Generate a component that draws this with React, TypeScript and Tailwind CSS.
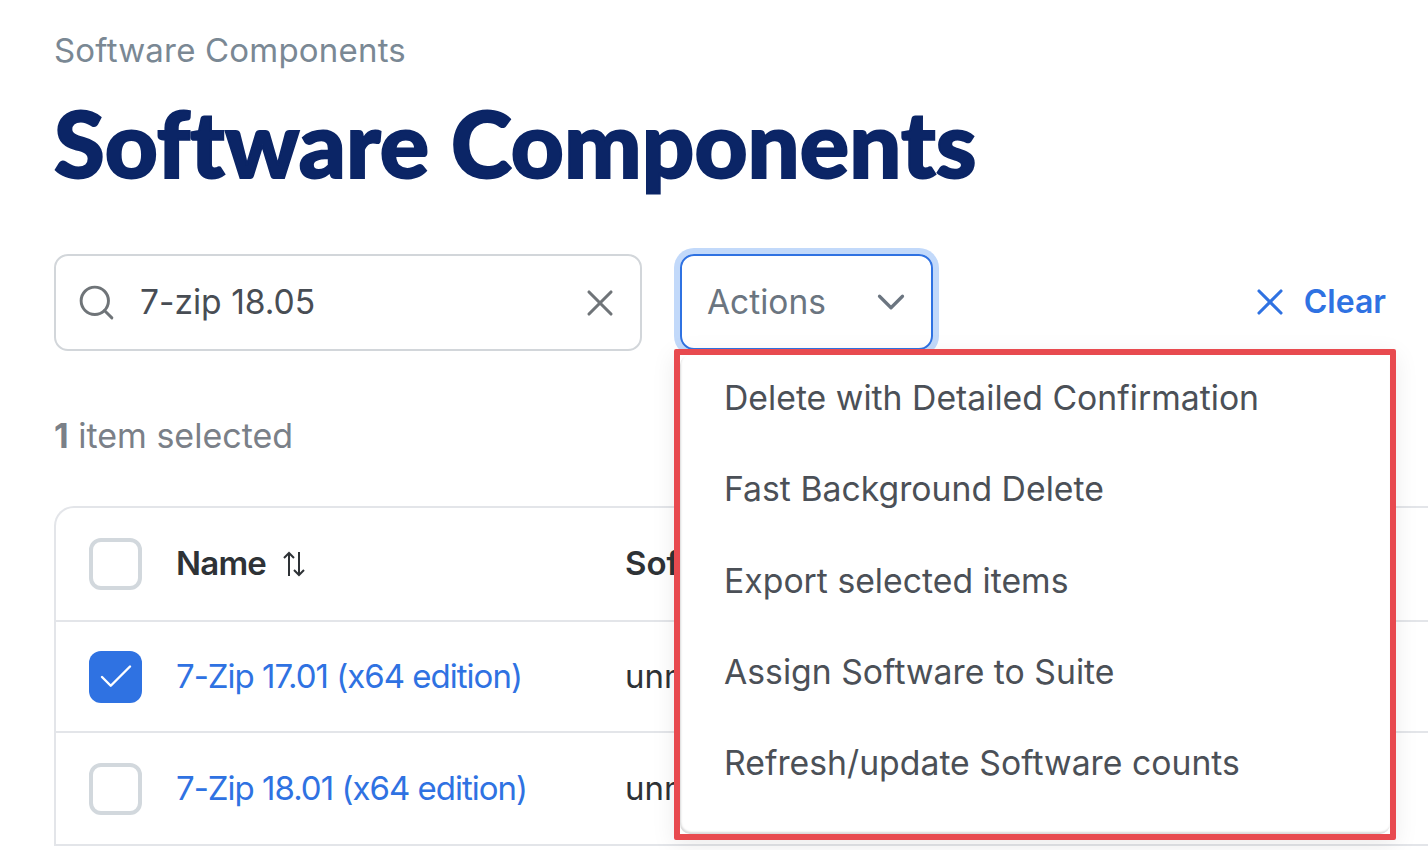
import { Check, ChevronDown, Search, X } from 'lucide-react';

const menuItems = [
  'Delete with Detailed Confirmation',
  'Fast Background Delete',
  'Export selected items',
  'Assign Software to Suite',
  'Refresh/update Software counts',
];

function Checkbox({ checked = false }: { checked?: boolean }) {
  if (checked) {
    return (
      <span className="flex h-[52px] w-[53px] items-center justify-center rounded-[12px] bg-[#2f72e2]">
        <Check size={42} strokeWidth={1.4} className="text-white" />
      </span>
    );
  }
  return <span className="block h-[52px] w-[53px] rounded-[12px] border-4 border-[#d2d8dd] bg-white" />;
}

function SortIcon() {
  return (
    <svg width="26" height="28" viewBox="0 0 26 28" fill="none" stroke="#2e3236" strokeWidth="2">
      <path d="M8 26V3M3 8l5-5 5 5" />
      <path d="M18 2v23M13 20l5 5 5-5" />
    </svg>
  );
}

function Row({ name, checked, tall }: { name: string; checked?: boolean; tall?: boolean }) {
  return (
    <div className={tall ? 'flex h-[113px] items-center border-b-2 border-[#e3e5e9] pl-[33px]' : 'flex h-[111px] items-center border-b-2 border-[#e3e5e9] pl-[33px]'}>
      <Checkbox checked={checked} />
      <a className="ml-[34px] w-[449px] text-[33px] tracking-[-1px] text-[#2f72e2]">{name}</a>
      <span className="text-[33px] text-[#2e3236]">unmanaged</span>
    </div>
  );
}

export default function App() {
  return (
    <div className="h-[850px] w-[1428px] overflow-hidden bg-white pl-[54px] pt-[30px] font-['Inter',sans-serif]">
      <div className="text-[33px] leading-[40px] tracking-[0.2px] text-[#7a8894]">Software Components</div>
      <h1 className="mt-[18px] h-[130px] font-['Lato',sans-serif] text-[92px] font-black leading-[110px] tracking-[0.1px] text-[#0b2566] [-webkit-text-stroke:2px_#0b2566]">
        Software Components
      </h1>

      <div className="mt-[36px] flex items-start">
        <div className="flex h-[97px] w-[588px] items-center rounded-[14px] border-2 border-[#d2d6da] pl-[20px] pr-[18px]">
          <Search size={41} strokeWidth={1.7} className="text-[#6f7478]" />
          <span className="ml-[23px] flex-1 text-[33.6px] text-[#484d54]">7-zip 18.05</span>
          <X size={44} strokeWidth={1.7} className="text-[#6f7478]" />
        </div>

        <div className="relative ml-[38px]">
          <button className="flex h-[96px] w-[253px] items-center justify-between rounded-[14px] border-2 border-[#2f72e2] pl-[25px] pr-[17px] text-[33.5px] text-[#6b7580] ring-[6px] ring-[#c2d9fa]">
            Actions
            <ChevronDown size={46} strokeWidth={1.7} className="text-[#6b7580]" />
          </button>
          <div className="absolute left-[-6px] top-[95px] z-10 h-[491px] w-[722px] rounded-[2px] border-[6px] border-[#e84a4f] shadow-[0_6px_24px_rgba(0,0,0,0.08)]">
            <ul className="h-full rounded-[10px] bg-white pl-[44px] shadow-[inset_1px_-2px_2px_rgba(0,0,0,0.15)]">
              {menuItems.map((item) => (
                <li key={item} className="h-[91.25px] pt-[23px] text-[33.75px] leading-[40px] text-[#4b5057]">
                  {item}
                </li>
              ))}
            </ul>
          </div>
        </div>

        <button className="ml-auto mr-[42px] mt-[24px] flex items-center gap-[12px] text-[32px] font-semibold leading-[48px] text-[#2f72e2]">
          <X size={44} strokeWidth={1.7} />
          Clear
        </button>
      </div>

      <div className="mt-[63px] text-[34px] leading-[44px] text-[#7a8088]">
        <span className="font-bold">1</span> item selected
      </div>

      <div className="mt-[48px] w-[1500px] rounded-tl-[20px] border-l-2 border-t-2 border-[#e3e5e9]">
        <div className="flex h-[114px] items-center border-b-2 border-[#e3e5e9] pl-[33px]">
          <Checkbox />
          <span className="ml-[34px] text-[33px] font-semibold tracking-[-0.8px] text-[#2e3236]">Name</span>
          <span className="ml-[15px] w-[344px]">
            <SortIcon />
          </span>
          <span className="text-[33px] font-semibold text-[#2e3236]">Software</span>
        </div>
        <Row name="7-Zip 17.01 (x64 edition)" checked />
        <Row name="7-Zip 18.01 (x64 edition)" tall />
      </div>
    </div>
  );
}
